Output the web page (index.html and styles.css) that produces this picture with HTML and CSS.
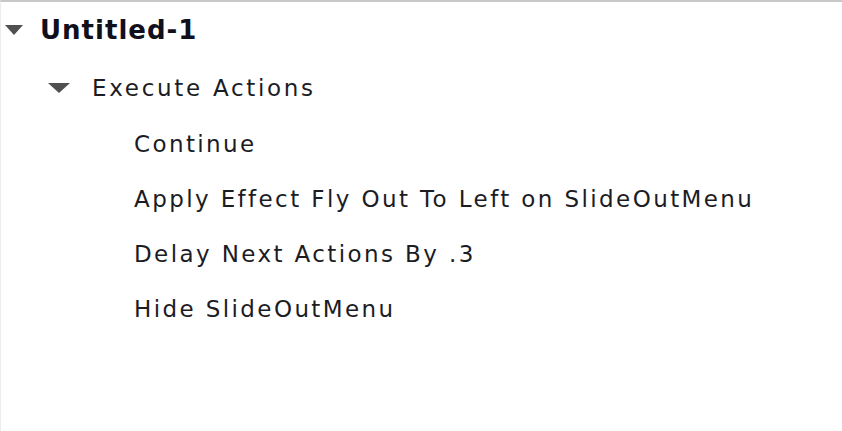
FILE: index.html
```html
<!DOCTYPE html>
<html lang="en">
<head>
    <meta charset="UTF-8">
    <title>Actions</title>
    <link rel="stylesheet" href="styles.css">
</head>
<body>
    <div class="panel">
        <ul class="tree">
            <li>
                <div class="node root"><span class="twisty"></span>Untitled-1</div>
                <ul>
                    <li>
                        <div class="node group"><span class="twisty"></span>Execute Actions</div>
                        <ul>
                            <li><div class="node action">Continue</div></li>
                            <li><div class="node action">Apply Effect Fly Out To Left on SlideOutMenu</div></li>
                            <li><div class="node action">Delay Next Actions By .3</div></li>
                            <li><div class="node action">Hide SlideOutMenu</div></li>
                        </ul>
                    </li>
                </ul>
            </li>
        </ul>
    </div>
</body>
</html>
```

FILE: styles.css
```css
html, body {
    margin: 0;
    height: 100%;
    background: #fff;
}
.panel {
    box-sizing: border-box;
    height: 100%;
    border-top: 2px solid #c8c8c8;
    border-left: 1px solid #ececec;
    font-family: "DejaVu Sans", Verdana, sans-serif;
    font-size: 23px;
    letter-spacing: 2.4px;
    color: #1c1c24;
}
.tree, .tree ul {
    list-style: none;
    margin: 0;
    padding: 0;
}
.node {
    display: flex;
    align-items: center;
    height: 55px;
    white-space: nowrap;
}
.root {
    height: 56px;
    padding-left: 4px;
    font-weight: bold;
    font-size: 26px;
    letter-spacing: 1px;
    color: #10101c;
}
.group {
    padding-left: 47px;
    margin-top: 2px;
    height: 56px;
    letter-spacing: 2.7px;
}
.action {
    padding-left: 133px;
}
.twisty {
    width: 0;
    height: 0;
    border-left: 9px solid transparent;
    border-right: 9px solid transparent;
    border-top: 10px solid #505050;
    margin-right: 17px;
}
.group .twisty {
    border-left-width: 11px;
    border-right-width: 11px;
    margin-right: 22px;
}
```
